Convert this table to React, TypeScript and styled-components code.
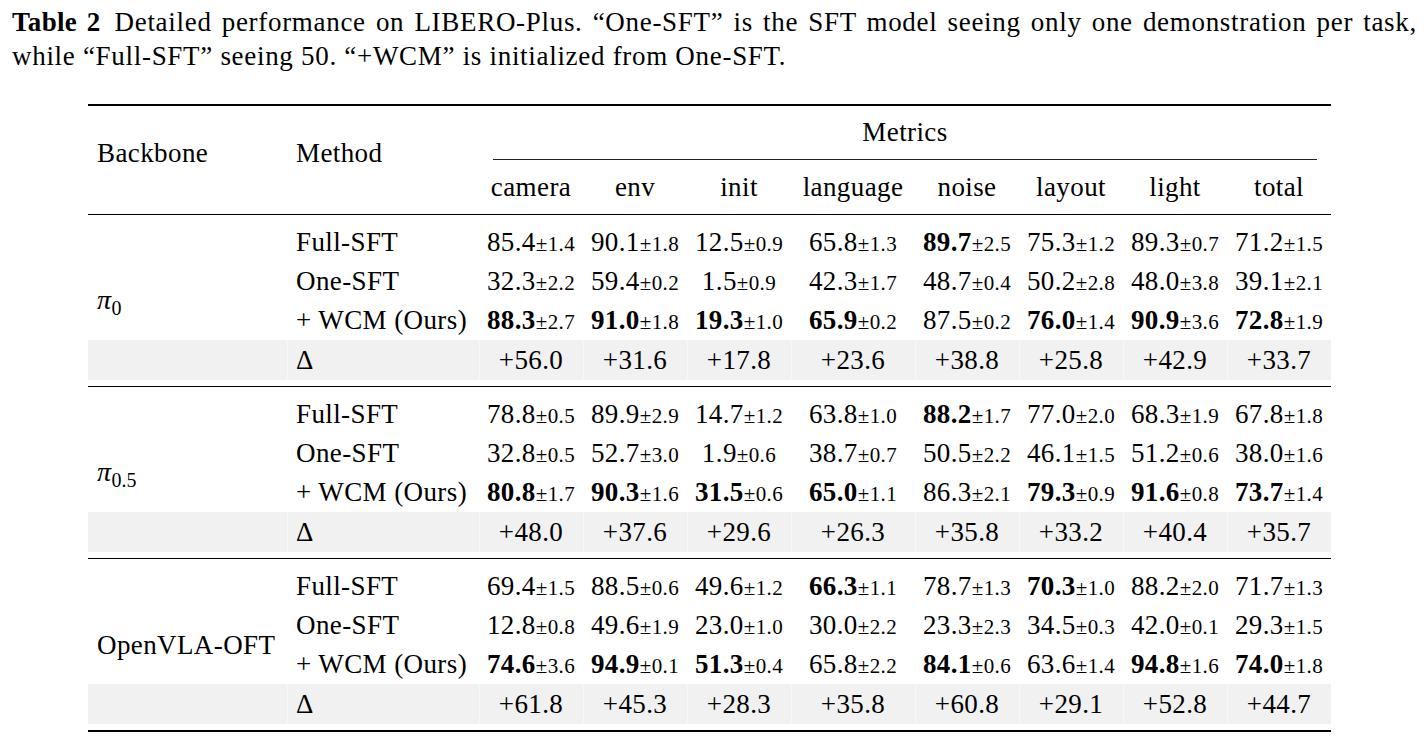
import { Fragment } from "react";
import styled, { createGlobalStyle } from "styled-components";

const GlobalStyle = createGlobalStyle`
  html, body {
    margin: 0;
    padding: 0;
    background: #fff;
  }
  body {
    font-family: "Liberation Serif", "Times New Roman", serif;
    color: #000;
  }
`;

// column widths: backbone, method, then the 8 metrics
const COLS = "199px 192px 104px 104px 104px 124px 104px 104px 104px 104px";

const METRICS = ["camera", "env", "init", "language", "noise", "layout", "light", "total"];

type Group = {
    name: string;
    sub?: string;
    rows: { method: string; values: string[] }[];
    delta: string[];
};

// "*" marks a bold (best) value
const GROUPS: Group[] = [
    {
        name: "π",
        sub: "0",
        rows: [
            { method: "Full-SFT", values: ["85.4±1.4", "90.1±1.8", "12.5±0.9", "65.8±1.3", "*89.7±2.5", "75.3±1.2", "89.3±0.7", "71.2±1.5"] },
            { method: "One-SFT", values: ["32.3±2.2", "59.4±0.2", "1.5±0.9", "42.3±1.7", "48.7±0.4", "50.2±2.8", "48.0±3.8", "39.1±2.1"] },
            { method: "+ WCM (Ours)", values: ["*88.3±2.7", "*91.0±1.8", "*19.3±1.0", "*65.9±0.2", "87.5±0.2", "*76.0±1.4", "*90.9±3.6", "*72.8±1.9"] },
        ],
        delta: ["+56.0", "+31.6", "+17.8", "+23.6", "+38.8", "+25.8", "+42.9", "+33.7"],
    },
    {
        name: "π",
        sub: "0.5",
        rows: [
            { method: "Full-SFT", values: ["78.8±0.5", "89.9±2.9", "14.7±1.2", "63.8±1.0", "*88.2±1.7", "77.0±2.0", "68.3±1.9", "67.8±1.8"] },
            { method: "One-SFT", values: ["32.8±0.5", "52.7±3.0", "1.9±0.6", "38.7±0.7", "50.5±2.2", "46.1±1.5", "51.2±0.6", "38.0±1.6"] },
            { method: "+ WCM (Ours)", values: ["*80.8±1.7", "*90.3±1.6", "*31.5±0.6", "*65.0±1.1", "86.3±2.1", "*79.3±0.9", "*91.6±0.8", "*73.7±1.4"] },
        ],
        delta: ["+48.0", "+37.6", "+29.6", "+26.3", "+35.8", "+33.2", "+40.4", "+35.7"],
    },
    {
        name: "OpenVLA-OFT",
        rows: [
            { method: "Full-SFT", values: ["69.4±1.5", "88.5±0.6", "49.6±1.2", "*66.3±1.1", "78.7±1.3", "*70.3±1.0", "88.2±2.0", "71.7±1.3"] },
            { method: "One-SFT", values: ["12.8±0.8", "49.6±1.9", "23.0±1.0", "30.0±2.2", "23.3±2.3", "34.5±0.3", "42.0±0.1", "29.3±1.5"] },
            { method: "+ WCM (Ours)", values: ["*74.6±3.6", "*94.9±0.1", "*51.3±0.4", "65.8±2.2", "*84.1±0.6", "63.6±1.4", "*94.8±1.6", "*74.0±1.8"] },
        ],
        delta: ["+61.8", "+45.3", "+28.3", "+35.8", "+60.8", "+29.1", "+52.8", "+44.7"],
    },
];

const Page = styled.div`
    width: 1424px;
    height: 746px;
    overflow: hidden;
    font-size: 27px;
    letter-spacing: 0.4px;
`;

const Caption = styled.div`
    padding: 5px 7px 0 12px;
    line-height: 34px;
    letter-spacing: 0.7px;
`;

const CaptionLine = styled.div<{ $justify?: boolean }>`
    text-align: ${(p) => (p.$justify ? "justify" : "left")};
    text-align-last: ${(p) => (p.$justify ? "justify" : "left")};
`;

const CaptionLabel = styled.span`
    font-weight: 700;
    letter-spacing: 0.3px;
    margin-right: 14px;
`;

const TableWrap = styled.div`
    margin: 31px 0 0 88px;
    width: 1243px;
    border-top: 2px solid #000;
`;

const Header = styled.div`
    display: grid;
    grid-template-columns: ${COLS};
    grid-template-rows: 54px 54px;
    border-bottom: 1px solid #000;
`;

const HeadStub = styled.div<{ $col: number }>`
    grid-column: ${(p) => p.$col};
    grid-row: 1 / span 2;
    align-self: center;
    padding: 0 0 14px 9px;
`;

const MetricsTitle = styled.div`
    grid-column: 3 / -1;
    grid-row: 1;
    margin: 0 14px;
    border-bottom: 1px solid #222;
    display: flex;
    align-items: center;
    justify-content: center;
`;

const ColLabel = styled.div`
    grid-row: 2;
    align-self: center;
    text-align: center;
`;

const GroupBlock = styled.div<{ $last?: boolean }>`
    display: grid;
    grid-template-columns: ${COLS};
    grid-template-rows: 39px 39px 39px 40px;
    padding: 8px 0 6px;
    border-bottom: ${(p) => (p.$last ? "2px" : "1px")} solid #000;
`;

const BackboneCell = styled.div`
    grid-column: 1;
    grid-row: 1 / span 4;
    align-self: center;
    padding-left: 9px;
    position: relative;
    z-index: 1;
`;

const Pi = styled.i`
    font-size: 28px;
`;

const Sub = styled.span`
    font-size: 20px;
    vertical-align: -6px;
    letter-spacing: 0;
`;

const MethodCell = styled.div`
    grid-column: 2;
    align-self: center;
    padding-left: 9px;
    white-space: nowrap;
`;

const ValueCell = styled.div`
    align-self: center;
    text-align: center;
    white-space: nowrap;
`;

const Spread = styled.span`
    font-size: 21px;
`;

const GrayRow = styled.div`
    grid-column: 1 / -1;
    grid-row: 4;
    display: grid;
    grid-template-columns: ${COLS};
    background: #f1f1f1;
`;

const GrayCell = styled.div<{ $center?: boolean; $sep?: boolean }>`
    display: flex;
    align-items: center;
    justify-content: ${(p) => (p.$center ? "center" : "flex-start")};
    padding-left: ${(p) => (p.$center ? "0" : "9px")};
    box-shadow: ${(p) => (p.$sep ? "inset 1px 0 0 #f7f7f7" : "none")};
`;

const Value = ({ raw }: { raw: string }) => {
    const bold = raw.startsWith("*");
    const [main, spread] = raw.replace("*", "").split("±");
    return (
        <ValueCell>
            {bold ? <b>{main}</b> : main}
            <Spread>±{spread}</Spread>
        </ValueCell>
    );
};

const App = () => {
    return (
        <Page>
            <GlobalStyle />
            <Caption>
                <CaptionLine $justify>
                    <CaptionLabel>Table 2</CaptionLabel>
                    Detailed performance on LIBERO-Plus. “One-SFT” is the SFT model seeing only one demonstration per task,
                </CaptionLine>
                <CaptionLine>while “Full-SFT” seeing 50. “+WCM” is initialized from One-SFT.</CaptionLine>
            </Caption>

            <TableWrap>
                <Header>
                    <HeadStub $col={1}>Backbone</HeadStub>
                    <HeadStub $col={2}>Method</HeadStub>
                    <MetricsTitle>Metrics</MetricsTitle>
                    {METRICS.map((m) => (
                        <ColLabel key={m}>{m}</ColLabel>
                    ))}
                </Header>

                {GROUPS.map((g, gi) => (
                    <GroupBlock key={gi} $last={gi === GROUPS.length - 1}>
                        <GrayRow>
                            <GrayCell />
                            <GrayCell $sep>Δ</GrayCell>
                            {g.delta.map((d, i) => (
                                <GrayCell key={i} $center $sep>
                                    {d}
                                </GrayCell>
                            ))}
                        </GrayRow>
                        <BackboneCell>
                            {g.sub ? (
                                <>
                                    <Pi>{g.name}</Pi>
                                    <Sub>{g.sub}</Sub>
                                </>
                            ) : (
                                g.name
                            )}
                        </BackboneCell>
                        {g.rows.map((r) => (
                            <Fragment key={r.method}>
                                <MethodCell>{r.method}</MethodCell>
                                {r.values.map((v, i) => (
                                    <Value key={i} raw={v} />
                                ))}
                            </Fragment>
                        ))}
                    </GroupBlock>
                ))}
            </TableWrap>
        </Page>
    );
};

export default App;
